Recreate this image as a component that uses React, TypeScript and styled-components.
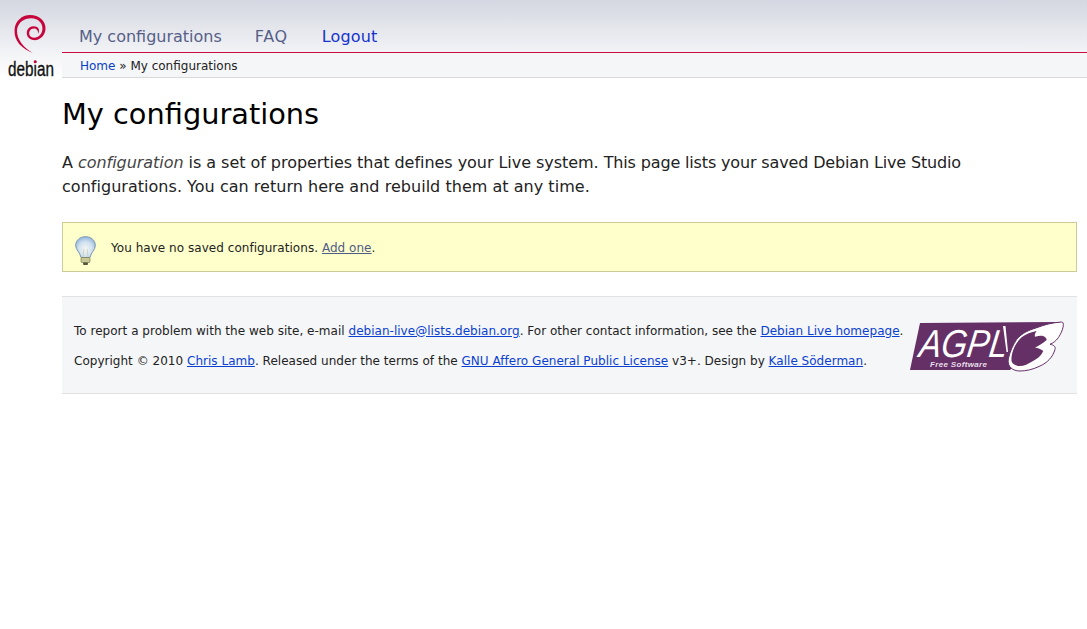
import styled, { createGlobalStyle } from 'styled-components';

const GlobalStyle = createGlobalStyle`
  html, body {
    margin: 0;
    padding: 0;
    background: #fff;
    color: #111;
    font-family: "DejaVu Sans", sans-serif;
  }
`;

const Shell = styled.div`
  display: flex;
  min-height: 100vh;
  padding-right: 10px;
  box-sizing: border-box;
  background: linear-gradient(#d4d7e1 0, #f2f3f6 52px, #fff 78px) no-repeat;
  background-size: 100% 78px;
`;

const LogoColumn = styled.div`
  flex: 0 0 62px;
  display: flex;
  justify-content: center;
  padding-top: 14px;
  box-sizing: border-box;
`;

const Main = styled.div`
  flex: 1;
  min-width: 0;
`;

const Nav = styled.nav`
  display: flex;
  align-items: flex-end;
  height: 53px;
  padding: 0 0 6px 17px;
  gap: 33px;
  box-sizing: border-box;
  border-bottom: 1px solid #cf0a3c;
  font-size: 16px;
  line-height: 19px;
  margin-right: -10px;
`;

const NavItem = styled.a<{ $active?: boolean; $tracking?: number }>`
  color: ${({ $active }) => ($active ? '#1433cc' : '#565f87')};
  letter-spacing: ${({ $tracking }) => $tracking ?? 0}px;
  margin-left: ${({ $active }) => ($active ? '1px' : '0')};
  text-decoration: none;
`;

const Breadcrumb = styled.div`
  height: 25px;
  line-height: 24px;
  padding: 1px 0 0 18px;
  box-sizing: border-box;
  font-size: 12px;
  color: #222;
  background: #f5f6f8;
  border-bottom: 1px solid #d9d9d9;
  margin-right: -10px;
  a {
    color: #0a3fc4;
    text-decoration: none;
  }
`;

const Title = styled.h1`
  margin: 19px 0 0;
  font-size: 28.8px;
  font-weight: 400;
  line-height: 34px;
  color: #000;
`;

const Intro = styled.p`
  margin: 20px 0 0;
  font-size: 16px;
  line-height: 24px;
  color: #222;
  em { color: #444; }
`;

const IntroLine = styled.span<{ $tracking: number }>`
  display: block;
  white-space: nowrap;
  letter-spacing: ${({ $tracking }) => $tracking}px;
`;

const TightRun = styled.span`
  letter-spacing: -0.15px;
`;

const Notice = styled.div`
  display: flex;
  align-items: center;
  gap: 15px;
  margin-top: 23px;
  height: 50px;
  box-sizing: border-box;
  padding-left: 12px;
  background: #ffffcc;
  border: 1px solid #cccc99;
  font-size: 12px;
  letter-spacing: 0.04px;
  color: #222;
  a { color: #4f5d86; }
`;

const NoticeText = styled.span`
  padding-top: 2px;
`;

const Bulb = styled.svg`
  margin-top: 8px;
  flex: none;
`;

const Footer = styled.footer`
  display: flex;
  align-items: center;
  justify-content: space-between;
  margin-top: 24px;
  height: 98px;
  box-sizing: border-box;
  padding: 0 11px 0 12px;
  background: #f5f6f8;
  border-top: 1px solid #e2e2e2;
  border-bottom: 1px solid #e2e2e2;
  font-size: 12px;
  color: #222;
  a { color: #0a3fd0; }
`;

const FooterText = styled.div`
  display: flex;
  flex-direction: column;
  gap: 15px;
  padding-top: 2px;
  line-height: 15px;
  letter-spacing: 0.022px;
`;

const Agpl = styled.svg`
  margin-top: 4px;
  flex: none;
`;

const DebianMark = () => (
  <svg width="50" height="66" viewBox="0 0 50 66">
    <g transform="translate(1 0)">
      <path
        d="M26 39 C15 35 7 27 7.5 16 C8 7 15 1 23 1 C32 1 39 7 38.5 15 C38 23 31 27 26 26 C21 25 19 21 20 17 C21 13 26 11 30 13 C33 15 32 18 31 20 C31.5 17 30 14.5 27 14.5 C23 14.5 21.5 18 22.5 21 C24 24.5 30 24.5 33 21 C36 18 36.5 12 33 8 C30 4 24 3.5 19 5 C13 7 10 12 10 17 C10 26 17 34 26 39 Z"
        fill="#c7053d"
      />
    </g>
    <text
      transform="translate(2 62) scale(1.02 1.4)"
      fontFamily='"Liberation Sans", sans-serif'
      fontSize="15"
      fill="#111"
      stroke="#111"
      strokeWidth="0.25"
    >
      debian
    </text>
    <circle cx="29.2" cy="47.8" r="1.5" fill="#c7053d" />
  </svg>
);

const BulbIcon = () => (
  <Bulb width="21" height="30" viewBox="0 0 21 30">
    <defs>
      <radialGradient id="glass" cx="0.5" cy="0.6" r="0.6">
        <stop offset="0" stopColor="#f4f8f6" />
        <stop offset="0.6" stopColor="#cfe0ee" />
        <stop offset="1" stopColor="#94b6dd" />
      </radialGradient>
    </defs>
    <path
      d="M10.5 0.7 C4.5 0.7 0.7 4.8 0.7 9.5 C0.7 14 5 16 6 21.5 L15 21.5 C16 16 20.3 14 20.3 9.5 C20.3 4.8 16.5 0.7 10.5 0.7 Z"
      fill="url(#glass)"
      stroke="#7793b5"
      strokeWidth="1"
    />
    <path d="M8 21 L9 13 M13 21 L12 13" stroke="#c9cdb4" strokeWidth="0.8" fill="none" />
    <rect x="6" y="21.5" width="9" height="5" rx="1" fill="#c8c894" stroke="#7c7c58" strokeWidth="0.7" />
    <rect x="8" y="26.5" width="5" height="2.5" rx="1" fill="#55553f" />
  </Bulb>
);

const AgplLogo = () => (
  <Agpl width="156" height="52" viewBox="0 0 156 52">
    <path d="M10 2 L150 1 L100 49 L0 49 Z" fill="#653066" />
    <path d="M93 5 L95.5 5 L98 31 L96.5 31 Z" fill="#fff" />
    <path
      d="M98.3 38 C100 30 103 24 106.7 18.3 C112 12 119 9 126.7 6.7 C135 3.5 143 1.5 151.7 1 C155 1 153 10 148.3 16.7 C146 20 143 22 140 23.3 C144 24 146 26 145 28.3 C143 36 137 42 130 45 C123 48.5 116 50 110 50 C103 50 97 46 98.3 38 Z"
      fill="#fff"
      stroke="#653066"
      strokeWidth="1"
    />
    <path
      d="M101.5 40 C101 31 106 21 112 16 C116 13 121 11 126.7 10 C125 12 124.5 14 125 15.7 C128 15 131 14.6 133 15 C135.5 15.6 136.5 17.5 136.7 19 C133 22 129 24.5 125 26.7 C128 27 131 28 133.3 30 C131 35 127 38 123 40 C118 43 114 45 110 45 C106 45 102.5 43.5 101.5 40 Z"
      fill="#653066"
    />
    <text
      transform="translate(8 36) skewX(-8)"
      fontFamily='"Liberation Sans", sans-serif'
      fontStyle="italic"
      fontSize="39"
      fill="#fff"
      textLength="88"
      lengthAdjust="spacingAndGlyphs"
    >
      AGPL
    </text>
    <text
      x="20"
      y="46"
      fontFamily='"Liberation Sans", sans-serif'
      fontStyle="italic"
      fontWeight="700"
      fontSize="8"
      fill="#e8dfe8"
      textLength="57"
    >
      Free Software
    </text>
  </Agpl>
);

function App() {
  return (
    <>
      <GlobalStyle />
      <Shell>
        <LogoColumn>
          <DebianMark />
        </LogoColumn>
        <Main>
          <Nav>
            <NavItem href="#">My configurations</NavItem>
            <NavItem href="#" $tracking={0.6}>FAQ</NavItem>
            <NavItem href="#" $active $tracking={0.17}>Logout</NavItem>
          </Nav>
          <Breadcrumb>
            <a href="#">Home</a> » My configurations
          </Breadcrumb>
          <Title>My configurations</Title>
          <Intro>
            <IntroLine $tracking={-0.043}>
              A <em>configuration</em> is a set of properties that defines your Live system. <TightRun>This page lists your saved Debian Live Studio</TightRun>
            </IntroLine>
            <IntroLine $tracking={0.03}>
              configurations. You can return here and rebuild them at any time.
            </IntroLine>
          </Intro>
          <Notice>
            <BulbIcon />
            <NoticeText>
              You have no saved configurations. <a href="#">Add one</a>.
            </NoticeText>
          </Notice>
          <Footer>
            <FooterText>
              <div>
                To report a problem with the web site, e-mail <a href="#">debian-live@lists.debian.org</a>. For other contact information, see the <a href="#">Debian Live homepage</a>.
              </div>
              <div>
                Copyright © 2010 <a href="#">Chris Lamb</a>. Released under the terms of the <a href="#">GNU Affero General Public License</a> v3+. Design by <a href="#">Kalle Söderman</a>.
              </div>
            </FooterText>
            <AgplLogo />
          </Footer>
        </Main>
      </Shell>
    </>
  );
}

export default App;
